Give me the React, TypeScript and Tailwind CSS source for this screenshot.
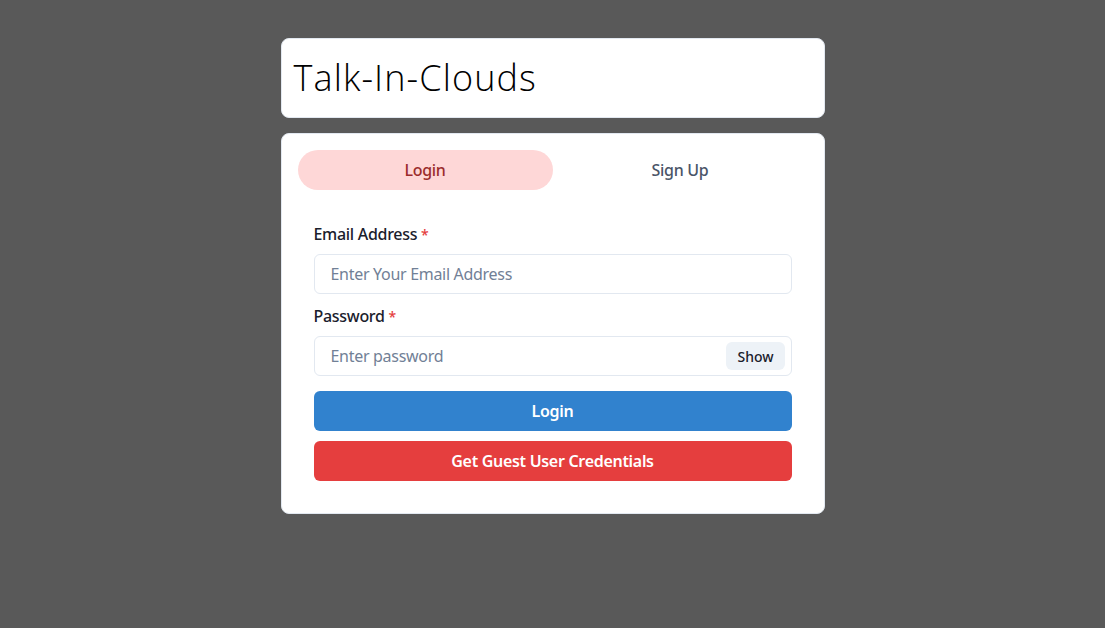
export default function App() {
  const sans = { fontFamily: '"Noto Sans", "Open Sans", sans-serif' };
  return (
    <div className="h-screen w-full overflow-hidden bg-[#595959] pt-[38px]" style={sans}>
      <div className="mx-auto w-[576px] px-4">
        <div className="mb-[15px] rounded-lg border border-[#e2e8f0] bg-white p-3">
          <h1 className="text-[36px] leading-[54px] font-light tracking-[1.1px] text-black" style={{ fontFamily: '"Open Sans", sans-serif' }}>
            Talk-In-Clouds
          </h1>
        </div>
        <div className="rounded-lg border border-[#e2e8f0] bg-white p-4">
          <div className="mb-4 flex">
            <button className="h-10 flex-1 rounded-full bg-[#fed7d7] text-[16px] font-medium tracking-[-0.3px] text-[#9b2c2c]">Login</button>
            <button className="h-10 flex-1 rounded-full text-[16px] font-medium tracking-[-0.3px] text-[#4a5568]">Sign Up</button>
          </div>
          <div className="p-4">
            <div className="flex flex-col">
              <label className="mb-2 h-6 overflow-hidden text-[16px] leading-6 font-medium tracking-[-0.3px] text-[#1a202c]">
                Email Address <span className="text-[14px] leading-none text-[#e53e3e]">*</span>
              </label>
              <input
                className="h-10 w-full rounded-md border border-[#e2e8f0] px-4 text-[16px] tracking-[-0.3px] text-[#1a202c] outline-none placeholder:text-[#718096]"
                placeholder="Enter Your Email Address"
              />
            </div>
            <div className="mt-[10px] flex flex-col">
              <label className="mb-2 h-6 overflow-hidden text-[16px] leading-6 font-medium tracking-[-0.3px] text-[#1a202c]">
                Password <span className="text-[14px] leading-none text-[#e53e3e]">*</span>
              </label>
              <div className="relative">
                <input
                  className="h-10 w-full rounded-md border border-[#e2e8f0] pl-4 pr-[72px] text-[16px] tracking-[-0.3px] text-[#1a202c] outline-none placeholder:text-[#718096]"
                  placeholder="Enter password"
                  type="password"
                />
                <div className="absolute right-0 top-0 flex h-10 w-[72px] items-center justify-center">
                  <button className="h-7 w-[59px] rounded-md bg-[#edf2f7] text-[14px] font-medium text-[#1a202c]">Show</button>
                </div>
              </div>
            </div>
            <button className="mt-[15px] h-10 w-full rounded-md bg-[#3182ce] text-[16px] font-semibold tracking-[-0.3px] text-white">Login</button>
            <button className="mt-[10px] h-10 w-full rounded-md bg-[#e53e3e] text-[16px] font-semibold tracking-[-0.3px] text-white">
              Get Guest User Credentials
            </button>
          </div>
        </div>
      </div>
    </div>
  );
}
